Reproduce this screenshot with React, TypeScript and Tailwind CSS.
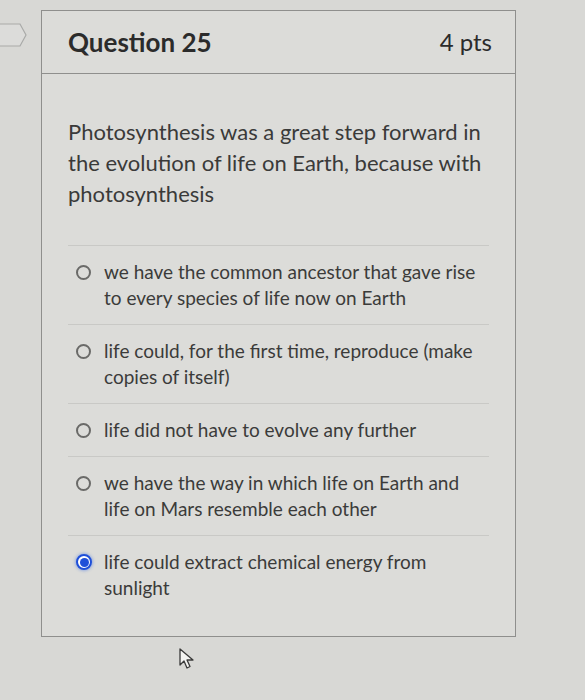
import React from 'react';

const answers = [
  { text: 'we have the common ancestor that gave rise to every species of life now on Earth', checked: false },
  { text: 'life could, for the first time, reproduce (make copies of itself)', checked: false },
  { text: 'life did not have to evolve any further', checked: false },
  { text: 'we have the way in which life on Earth and life on Mars resemble each other', checked: false },
  { text: 'life could extract chemical energy from sunlight', checked: true },
];

function Radio({ checked }: { checked: boolean }) {
  if (checked) {
    return (
      <span className="mt-[5px] flex h-[16px] w-[16px] flex-shrink-0 items-center justify-center rounded-full border-2 border-[#1f4fd8] bg-white shadow-[0_0_3px_1px_rgba(60,110,230,0.45)]">
        <span className="h-[9px] w-[9px] rounded-full bg-[#1f4fd8]" />
      </span>
    );
  }
  return <span className="mt-[6px] h-[15px] w-[15px] flex-shrink-0 rounded-full border-2 border-[#6a6a68]" />;
}

export default function App() {
  return (
    <div
      className="relative h-[700px] w-[585px] overflow-hidden bg-[#d8d8d5] pt-[10px]"
      style={{ fontFamily: 'Lato, "Open Sans", sans-serif' }}
    >
      <div className="flex">
        {/* side tab */}
        <div className="w-[41px] flex-shrink-0 pt-[13px]">
          <svg width="28" height="24" viewBox="0 0 28 24">
            <path d="M-2 1 H20 L26 12 L20 23 H-2 Z" fill="#dcdcda" stroke="#a9aaa8" strokeWidth="1.2" />
          </svg>
        </div>

        {/* question card */}
        <div className="h-[627px] w-[475px] border border-[#8f8f8d] bg-[#dcdcd9]">
          <div className="flex h-[63px] items-center justify-between border-b border-[#8f8f8d] pl-[26px] pr-[23px] text-[#2b2b2b]">
            <span className="text-[26px] font-bold">Question 25</span>
            <span className="text-[24px]">4 pts</span>
          </div>

          <div className="px-[26px] pt-[42px]">
            <p className="text-[22px] leading-[31px] text-[#3a3a39]">
              Photosynthesis was a great step forward in the evolution of life on Earth, because with photosynthesis
            </p>

            <div className="mt-[36px] border-t border-[#c9c9c6]">
              {answers.map((a, i) => (
                <div
                  key={i}
                  className={`flex py-[13px] pl-[8px] pr-[6px] ${a.checked ? 'gap-[12px]' : 'gap-[13px]'} ${i < answers.length - 1 ? 'border-b border-[#c9c9c6]' : ''}`}
                >
                  <Radio checked={a.checked} />
                  <span className="text-[19px] leading-[26px] text-[#3b3b3a]">{a.text}</span>
                </div>
              ))}
            </div>
          </div>
        </div>
      </div>

      {/* mouse cursor */}
      <svg className="absolute left-[178px] top-[648px]" width="18" height="22" viewBox="0 0 18 22">
        <path d="M2 1 L2 17 L6 13 L9 20 L12 18.5 L9 12 L15 12 Z" fill="#f4f4f2" stroke="#3a3a3a" strokeWidth="1.3" strokeLinejoin="round" />
      </svg>
    </div>
  );
}
